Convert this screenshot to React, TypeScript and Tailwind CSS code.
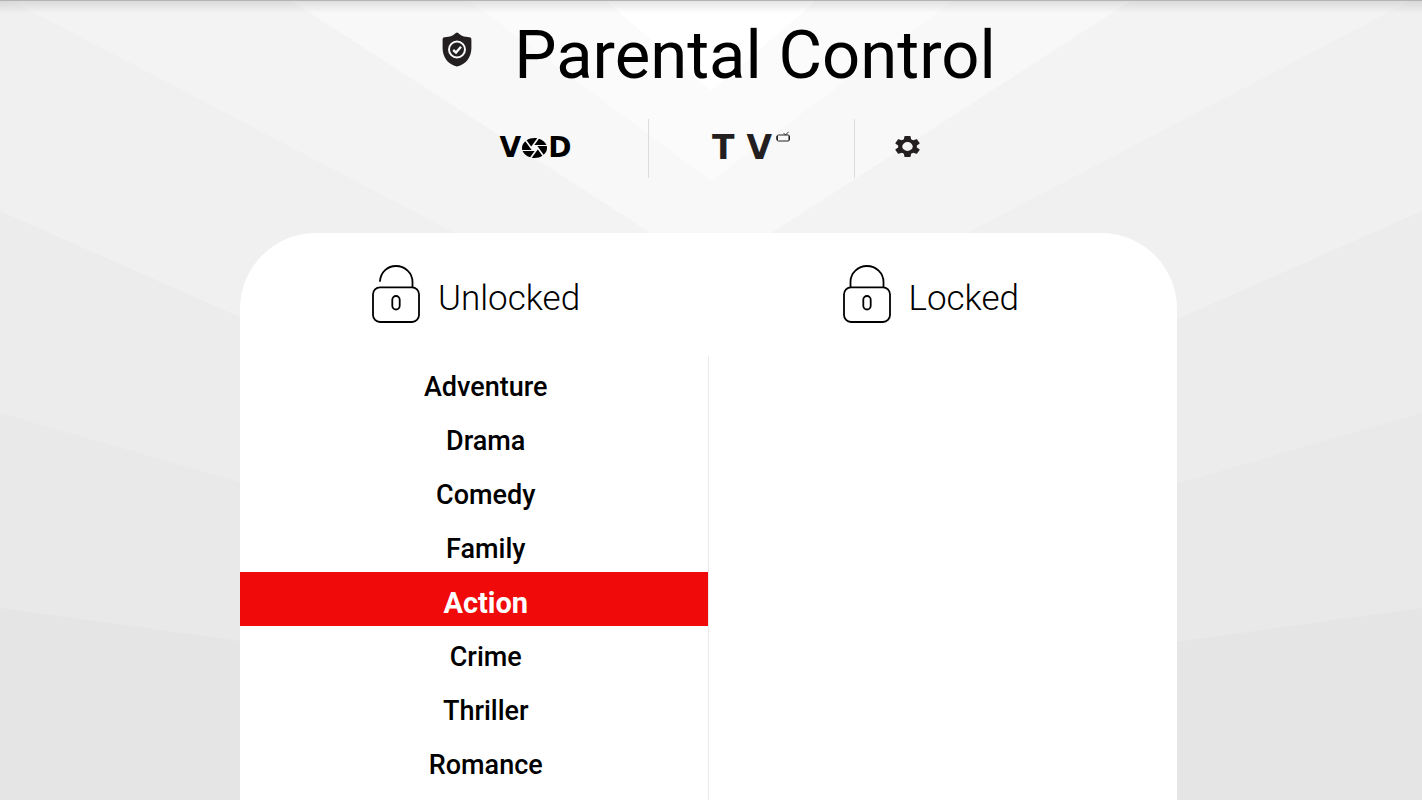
import React, { useState } from 'react'

interface IGenre {
    id: number
    name: string
}

interface IGenreItem {
    genre: IGenre
    active: boolean
    onSelect: () => void
}

const unlockedGenres: IGenre[] = [
    { id: 1, name: 'Adventure' },
    { id: 2, name: 'Drama' },
    { id: 3, name: 'Comedy' },
    { id: 4, name: 'Family' },
    { id: 5, name: 'Action' },
    { id: 6, name: 'Crime' },
    { id: 7, name: 'Thriller' },
    { id: 8, name: 'Romance' },
]

// nested chevrons, lightest one on top
const Backdrop = () => (
    <svg
        className="absolute inset-0 -z-10 h-full w-full"
        viewBox="0 0 1422 800"
        preserveAspectRatio="none"
        aria-hidden="true"
    >
        <rect width="1422" height="800" fill="#e5e5e5" />
        <path d="M0 0V608L711 706L1422 608V0Z" fill="#e9e9e9" />
        <path d="M0 0V413L711 618L1422 413V0Z" fill="#ececec" />
        <path d="M0 0V211L711 525L1422 211V0Z" fill="#f0f0f0" />
        <path d="M10 0L711 367L1412 0Z" fill="#f3f3f3" />
        <path d="M290 0L711 272L1132 0Z" fill="#f8f8f8" />
        <path d="M468 0L711 181L954 0Z" fill="#fbfbfb" />
        <path d="M605 0L711 91L817 0Z" fill="#ffffff" />
    </svg>
)

const ShieldIcon = () => (
    <svg className="h-[35px] w-[30px]" viewBox="0 0 30 35" aria-hidden="true">
        <path
            d="M15 .5C16.500 .5 18 3.500 22 4.500C24.500 5.100 27 4.900 28.500 5.600C29.300 6 29.400 7 29.400 9V16C29.400 25 24 32.500 15 34.500C6 32.500 .6 25 .6 16V9C.6 7 .7 6 1.500 5.600C3 4.900 5.500 5.100 8 4.500C12 3.500 13.500 .5 15 .5Z"
            fill="#231f20"
        />
        <circle cx="15" cy="17.500" r="8" fill="none" stroke="#f8f8f8" strokeWidth="2" />
        <path d="M11.200 18L14 20.600L19 14.800" fill="none" stroke="#f8f8f8" strokeWidth="2.400" />
    </svg>
)

const ApertureIcon = () => (
    <svg className="h-5 w-[25px]" viewBox="2 2 20 20" preserveAspectRatio="none" aria-hidden="true">
        <path
            d="M9.400 10.500l4.770-8.260C13.470 2.090 12.750 2 12 2c-2.400 0-4.600.85-6.320 2.250l3.660 6.350.06-.1zM21.540 9c-.92-2.920-3.150-5.260-6-6.340L11.880 9h9.660zm.26 1h-7.490l.29.5 4.760 8.250C21 16.970 22 14.610 22 12c0-.69-.07-1.350-.2-2zM8.540 12l-3.900-6.750C3.010 7.030 2 9.390 2 12c0 .69.07 1.350.2 2h7.490l-1.150-2zm-6.080 3c.92 2.920 3.150 5.260 6 6.340L12.120 15H2.460zm11.270 0l-3.900 6.760c.7.15 1.420.24 2.170.24 2.400 0 4.600-.85 6.320-2.250l-3.660-6.350-.93 1.600z"
            fill="#000"
        />
    </svg>
)

const TvIcon = () => (
    <svg className="h-[11px] w-[15px]" viewBox="0 0 15 11" fill="none" stroke="#231f20" aria-hidden="true">
        <rect x="1" y="4" width="12.500" height="6" rx="1.500" strokeWidth="1" />
        <path d="M1.200 5V9M13.200 5V9" strokeWidth="1.500" />
        <path d="M7.500 2L9.500 4L12.500 .8" strokeWidth=".9" />
    </svg>
)

const GearIcon = () => (
    <svg className="h-[21px] w-[25px]" viewBox="2 2 20 20" preserveAspectRatio="none" aria-hidden="true">
        <path
            fillRule="evenodd"
            d="M19.430 12.980c.04-.32.07-.64.07-.98s-.03-.66-.07-.98l2.110-1.650c.19-.15.24-.42.12-.64l-2-3.460c-.12-.22-.39-.3-.61-.22l-2.490 1c-.52-.4-1.080-.73-1.690-.98l-.38-2.650C14.460 2.180 14.250 2 14 2h-4c-.25 0-.46.18-.49.42l-.38 2.650c-.61.25-1.170.59-1.690.98l-2.490-1c-.23-.09-.49 0-.61.22l-2 3.460c-.13.22-.07.49.12.64l2.110 1.650c-.04.32-.07.65-.07.98s.03.66.07.98l-2.110 1.650c-.19.15-.24.42-.12.64l2 3.460c.12.22.39.3.61.22l2.490-1c.52.4 1.080.73 1.690.98l.38 2.650c.03.24.24.42.49.42h4c.25 0 .46-.18.49-.42l.38-2.650c.61-.25 1.170-.59 1.690-.98l2.490 1c.23.09.49 0 .61-.22l2-3.460c.12-.22.07-.49-.12-.64l-2.110-1.650zM12 16.200a4.200 4.200 0 1 1 0-8.400a4.200 4.200 0 1 1 0 8.400z"
            fill="#231f20"
        />
    </svg>
)

const PadlockIcon = ({ open }: { open?: boolean }) => (
    <svg
        className="h-[60px] w-12"
        viewBox="0 0 48 60"
        fill="none"
        stroke="#000"
        strokeWidth="1.800"
        strokeLinecap="round"
        aria-hidden="true"
    >
        {open ? (
            <path d="M8 16C8.800 7 15.500 1 24 1C33 1 40.500 8 40.500 17V22" />
        ) : (
            <path d="M7.500 22V17C7.500 8 15 1 24 1C33 1 40.500 8 40.500 17V22" />
        )}
        <rect x="1" y="22.300" width="46" height="34.700" rx="7" />
        <rect x="20.300" y="31" width="7.400" height="13.500" rx="3.700" />
    </svg>
)

const GenreItem = ({ genre, active, onSelect }: IGenreItem) => (
    <li>
        <button
            type="button"
            onClick={onSelect}
            className={
                active
                    ? 'flex h-[54px] w-full items-center justify-center bg-[#f00a0a] pt-2 pl-6 text-[29px] leading-8 font-bold text-white'
                    : 'flex h-[54px] w-full items-center justify-center pt-2 pl-6 text-[27px] leading-8 font-medium text-black'
            }
        >
            {genre.name}
        </button>
    </li>
)

export default function App() {
    const [selected, setSelected] = useState(5)

    return (
        <div className="relative isolate flex min-h-screen flex-col overflow-hidden font-['Roboto',sans-serif] text-black">
            <Backdrop />
            <div className="h-px bg-[#b4b4b4]" />
            <div className="h-3 bg-linear-to-b from-black/10 to-transparent" />

            <header className="flex items-start justify-center gap-[42px] pt-1 pl-4">
                <div className="pt-[15px]">
                    <ShieldIcon />
                </div>
                <h1 className="text-[67px] leading-[76px]">Parental Control</h1>
            </header>

            <nav className="flex justify-center pt-[26px] pl-0.5 font-['DejaVu_Sans',sans-serif] font-bold">
                <button type="button" className="flex h-[59px] w-[186px] items-center justify-center gap-px border-r border-[#dcdcdc] pr-10 pb-0.5" aria-label="VOD">
                    <span className="text-[28px] leading-8">V</span>
                    <ApertureIcon />
                    <span className="text-[28px] leading-8">D</span>
                </button>
                <button type="button" className="flex h-[59px] w-[206px] items-center justify-center border-r border-[#dcdcdc] pb-0.5 text-[#231f20]" aria-label="TV">
                    <span className="flex gap-3 text-[33px] leading-8">
                        <span>T</span>
                        <span>V</span>
                    </span>
                    <span className="self-start pt-3 pl-1">
                        <TvIcon />
                    </span>
                </button>
                <button type="button" className="flex h-[59px] w-[106px] items-center justify-center pr-0.5 pb-1" aria-label="Settings">
                    <GearIcon />
                </button>
            </nav>

            <main className="flex flex-1 flex-col pt-[55px] pr-[245px] pl-60">
                <div className="grid flex-1 grid-cols-2 rounded-t-[76px] bg-white">
                    <section className="flex flex-col">
                        <div className="flex h-[123px] items-center gap-[18px] pl-[132px]">
                            <PadlockIcon open />
                            <h2 className="pt-2 text-[35px] leading-[44px] font-light">Unlocked</h2>
                        </div>
                        <ul className="flex-1 border-r border-[#ebebeb]">
                            {unlockedGenres.map((genre) => (
                                <GenreItem
                                    key={genre.id}
                                    genre={genre}
                                    active={genre.id === selected}
                                    onSelect={() => setSelected(genre.id)}
                                />
                            ))}
                        </ul>
                    </section>
                    <section>
                        <div className="flex h-[123px] items-center gap-[18px] pl-[134px]">
                            <PadlockIcon />
                            <h2 className="pt-2 text-[35px] leading-[44px] font-light">Locked</h2>
                        </div>
                    </section>
                </div>
            </main>
        </div>
    )
}
